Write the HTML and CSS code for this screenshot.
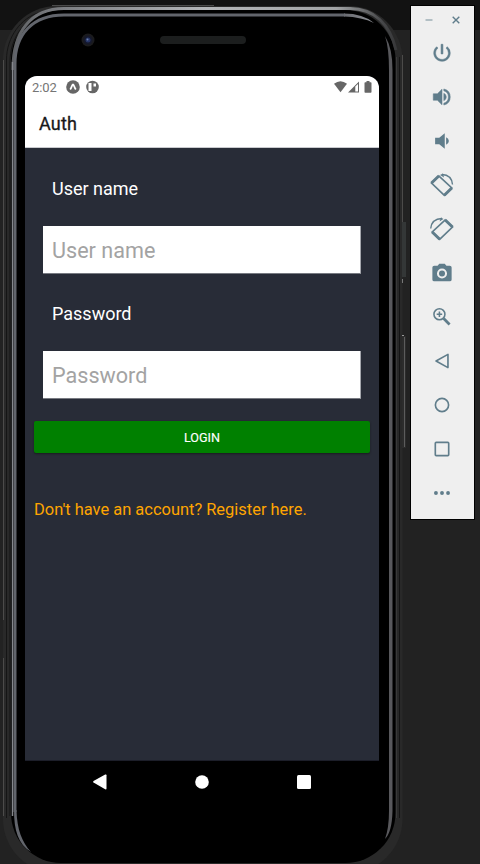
FILE: index.html
```html
<!DOCTYPE html>
<html lang="en">
<head>
<meta charset="utf-8">
<title>Auth</title>
<link rel="stylesheet" href="styles.css">
</head>
<body>
<div class="desktop">
  <div class="phone">
    <svg class="frame" width="410" height="864" viewBox="0 0 410 864" fill="none">
      <defs>
        <linearGradient id="rim" x1="0" y1="0" x2="410" y2="0" gradientUnits="userSpaceOnUse">
          <stop offset="0" stop-color="#55575a"/><stop offset=".12" stop-color="#77797d"/><stop offset=".5" stop-color="#b4b6b9"/><stop offset=".82" stop-color="#a2a4a6"/><stop offset=".93" stop-color="#47484a"/><stop offset="1" stop-color="#29292a"/>
        </linearGradient>
        <linearGradient id="shine" x1="345" y1="0" x2="374" y2="0" gradientUnits="userSpaceOnUse">
          <stop offset="0" stop-color="#6a6c72"/><stop offset="1" stop-color="#8f9196"/>
        </linearGradient>
      </defs>
      <rect x="3" y="6" width="399.500" height="867" rx="54" fill="#292929"/>
      <path d="M3.500 620V60M3.500 658V816M402.500 55V222" stroke="#4c4b4a"/>
      <path d="M52 5.500H214" stroke="#4b4b4b"/>
      <path d="M6.500 818V60C6.500 36 22 18 38 13M10 816V62C10 38 24 20 42 13" stroke="#151515"/>
      <path d="M399.500 818V57" stroke="#151515"/>
      <path d="M396.500 818V57" stroke="#3a3a3a"/>
      <rect x="11" y="10" width="384.500" height="853" rx="50" fill="#000"/>
      <path d="M13 70C12.500 32 31 8.500 64 8.500H350C374 8.500 390 24 396 50" stroke="url(#rim)" stroke-width="3"/>
      <path d="M12.500 816V62" stroke="#85878c" stroke-width="1.500"/>
      <path d="M15 812V64C15 34 33 15 64 15H345" stroke="#62656c" stroke-width="3"/>
      <path d="M344 13.500Q363 13.500 374 23Q362 17 344 16.500z" fill="url(#shine)"/>
      <path d="M14 810H16.500C17 830 22 842 31 852C18 844 14 830 14 810z" fill="#62656c"/>
      <path d="M385 36Q392.500 48 392.500 70V811Q392 832 385 839Q389 828 389 811V70Q389 48 385 36z" fill="#58585c"/>
      <rect x="402" y="222" width="4" height="55" fill="#343737"/><path d="M402.500 279V283" stroke="#777"/>
      <path d="M402 335.500H404" stroke="#999"/>
      <rect x="402" y="336" width="4" height="112" fill="#2c2c2c"/><path d="M404.500 337V447" stroke="#5c5c5c"/>
      <circle cx="88" cy="40" r="6.500" fill="#1b1b1d"/><circle cx="88" cy="40" r="4.500" fill="#15182a"/><circle cx="88" cy="40" r="2.500" fill="#263466"/><circle cx="87.500" cy="39.500" r="1" fill="#6c7fa9"/>
      <rect x="160" y="36" width="86" height="8" rx="4" fill="#1c1e1e"/>
    </svg>
    <main class="screen">
      <div class="status">
        <span class="clock">2:02</span>
        <svg class="expo" width="14" height="14" viewBox="0 0 14 14"><circle cx="7" cy="7" r="6.800" fill="#666"/><path d="M4.200 9.600C5.400 8 6 5.400 6.700 4.500h.6C8 5.400 8.600 8 9.800 9.600" fill="none" stroke="#fff" stroke-width="1.700"/></svg>
        <svg width="13" height="14" viewBox="0 0 13 14"><circle cx="6.500" cy="7" r="6.300" fill="#666"/><path d="M2.500 3h3v8h-3zM7.500 3.500h2.500v3H7.500z" fill="#fff"/></svg>
        <span class="signals">
          <svg width="13" height="12" viewBox="0 0 13 12"><path d="M0 2.800Q6.500-2.300 13 2.800L6.500 11.200z" fill="#666"/></svg>
          <svg width="11" height="12" viewBox="0 0 11 12"><path d="M0 11.500 11 .5v11zM7.300 5.500v5H10V3z" fill="#666" fill-rule="evenodd"/></svg>
          <svg class="battery" width="8" height="12" viewBox="0 0 8 12"><path d="M.5 2Q.5 1.300 1.200 1.300H2.500V0h3v1.300h1.300Q7.500 1.300 7.500 2V11q0 .8-.7.800H1.200q-.7 0-.7-.8z" fill="#666"/></svg>
        </span>
      </div>
      <header class="header"><h1>Auth</h1></header>
      <form class="form">
        <label for="user">User name</label>
        <input id="user" type="text" placeholder="User name">
        <label class="second" for="pass">Password</label>
        <input id="pass" type="password" placeholder="Password">
        <button type="button">LOGIN</button>
        <a class="register">Don't have an account? Register here.</a>
      </form>
    </main>
    <nav class="nav">
      <svg width="14" height="16" viewBox="0 0 14 16"><path d="M.5 7Q-.2 7.900.5 8.600L12.200 15.300Q13.500 15.800 13.500 14.500V1.200Q13.500 0 12.200.6z" fill="#fff"/></svg>
      <svg width="14" height="14" viewBox="0 0 14 14"><circle cx="7" cy="7" r="6.800" fill="#fff"/></svg>
      <svg width="14" height="14" viewBox="0 0 14 14"><rect width="14" height="14" rx="1.500" fill="#fff"/></svg>
    </nav>
  </div>
  <aside class="tools">
    <div class="window">
      <svg width="8" height="8" viewBox="0 0 8 8"><path d="M.5 4h7" stroke="#9eafb6" stroke-width="1.500"/></svg>
      <svg width="8" height="8" viewBox="0 0 8 8"><path d="M.7.700 7.300 7.300M7.300.700.7 7.300" stroke="#607d8b" stroke-width="1.400"/></svg>
    </div>
    <svg class="tool" viewBox="0 0 24 24"><path d="M13 2.500h-2v10.500h2zm4.830 2.670-1.420 1.420A6.920 6.920 0 0 1 19 12a7 7 0 1 1-11.420-5.420L6.170 5.170A9 9 0 1 0 21 12a8.940 8.940 0 0 0-3.170-6.830z" class="bold"/></svg>
    <svg class="tool" viewBox="0 0 24 24"><path d="M2.500 8.500v7h4.500l5 5V3.500L7 8.500zm14.200 3.500A4.500 4.500 0 0 0 14 7.970v8.050A4.480 4.480 0 0 0 16.700 12zM14 3.230v2.060a7 7 0 0 1 0 13.420v2.060a9 9 0 0 0 0-17.540z" class="bold"/></svg>
    <svg class="tool" viewBox="0 0 24 24"><path d="M19.500 12A4.500 4.500 0 0 0 16.500 7.970v8.050A4.480 4.480 0 0 0 19.500 12zM4.500 8.500v7h4.500l6 5V3.500L9 8.500z"/></svg>
    <svg class="tool rotate" viewBox="0 0 24 24"><g transform="translate(24 0) scale(-1 1)"><path d="M1.500 11.500C2 5.500 6 1.800 12 1.500" class="line thin"/><path d="M11 .5 14 2 10 4.500z"/><path d="M15.200 3 22.500 10 9.700 22.300 2.200 15z" class="line"/><path d="M15.200 3 22.500 10M2.200 15 9.700 22.300" class="line thick"/></g></svg>
    <svg class="tool rotate" viewBox="0 0 24 24"><path d="M.7 11.500C1.200 5.500 5.500 1.800 12 1.500" class="line thin"/><path d="M11 .5 13.500 2 9.500 4.500z"/><path d="M15.200 3 22.500 10 9.700 22.300 2.200 15z" class="line"/><path d="M15.200 3 22.500 10M2.200 15 9.700 22.300" class="line thick"/></svg>
    <svg class="tool" viewBox="0 0 24 24"><path fill-rule="evenodd" d="M9 2 7.170 4H3.500a2 2 0 0 0-2 2v13a2 2 0 0 0 2 2h17a2 2 0 0 0 2-2V6a2 2 0 0 0-2-2h-3.670L15 2zm3 5a5.500 5.500 0 1 0 0 11 5.500 5.500 0 0 0 0-11zm0 2.200a3.300 3.300 0 1 1 0 6.600 3.300 3.300 0 0 1 0-6.600z"/></svg>
    <svg class="tool" viewBox="0 0 24 24"><circle cx="9.200" cy="9" r="6" class="line"/><path d="M9.200 6v6M6.200 9h6" class="line"/><path d="m13.800 13.600 6.500 6.500" class="line thick"/></svg>
    <svg class="tool" viewBox="0 0 24 24"><path d="M18.500 4.800v14.400L5.500 12z" class="line slim"/></svg>
    <svg class="tool" viewBox="0 0 24 24"><circle cx="12" cy="12" r="7.200" class="line slim"/></svg>
    <svg class="tool" viewBox="0 0 24 24"><rect x="4.700" y="4.700" width="14.600" height="14.600" rx="1" class="line slim"/></svg>
    <svg class="tool" viewBox="0 0 24 24"><circle cx="5.400" cy="12" r="2.100"/><circle cx="12" cy="12" r="2.100"/><circle cx="18.600" cy="12" r="2.100"/></svg>
  </aside>
</div>
</body>
</html>
```
FILE: styles.css
```css
* { box-sizing: border-box; }
body { margin: 0; font-family: Roboto, sans-serif; background: #222; }
svg { display: block; flex: none; }
.desktop { display: flex; align-items: flex-start; width: 480px; height: 864px; overflow: hidden; background: linear-gradient(#121212 30px, #222 30px); }
.phone { position: relative; width: 410px; height: 864px; padding: 76px 31px 0 25px; }
.frame { position: absolute; left: 0; top: 0; }
.screen { position: relative; height: 685px; display: flex; flex-direction: column; background: #282c37; border-radius: 12px 12px 0 0; overflow: hidden; border-bottom: 1px solid #1c1e29; }
.status { height: 22px; flex: none; display: flex; align-items: center; padding: 0 7px; background: #fff; color: #757575; }
.clock { width: 34px; font-size: 13px; letter-spacing: -.1px; }
.expo { margin-right: 6px; }
.signals { margin-left: auto; display: flex; gap: 1px; }
.battery { margin-left: 4px; }
.header { height: 50px; flex: none; background: #fff; padding: 15px 14px 0; border-bottom: 1px solid #c9cace; }
h1 { margin: 0; font-size: 18px; line-height: 22px; font-weight: 400; letter-spacing: .2px; -webkit-text-stroke: .3px #18181a; color: #18181a; }
.form { display: flex; flex-direction: column; padding: 29px 9px 0; }
label { margin-left: 18px; height: 24px; font-size: 18px; line-height: 23px; color: #fff; }
input { margin: 25px 9px 0; height: 48px; border: 0; border-right: 1px solid #a5a7ad; border-bottom: 1px solid #777a81; border-radius: 0; padding: 2px 9px 0; background: #fff; font: 21.6px Roboto, sans-serif; color: #222; }
input::placeholder { color: #a3a3a3; opacity: 1; }
.second { margin-top: 28px; }
button { margin-top: 22px; height: 32px; padding: 1px 0 0; border: 0; border-radius: 2px; background: #008000; color: #fff; font: 400 12.6px Roboto, sans-serif; -webkit-text-stroke: .15px #fff; box-shadow: 0 1px 2px #1119; }
.register { margin-top: 46px; font-size: 16.45px; line-height: 22px; color: #ffa500; white-space: nowrap; }
.nav { position: relative; display: grid; grid-template-columns: 102px 102px 102px; justify-content: center; justify-items: center; align-items: center; height: 42px; margin-right: 1px; }
.tools { width: 65px; height: 515px; margin: 5px 0 0 0; border: 1px solid #000; padding-right: 1px; background: #efefef; display: flex; flex-direction: column; align-items: center; }
.window { display: flex; gap: 19px; height: 25px; align-items: center; padding-top: 3px; }
.tool { width: 22px; height: 22px; margin: 11px 0; fill: #607d8b; }
.rotate { width: 24px; height: 24px; margin: 10px 0; }
.bold { stroke: #607d8b; stroke-width: .6; }
.line { fill: none; stroke: #607d8b; stroke-width: 1.700; }
.thin { stroke-width: 1.400; }
.thick { stroke-width: 3; }
.slim { stroke-width: 1.800; stroke-linejoin: round; }
```
